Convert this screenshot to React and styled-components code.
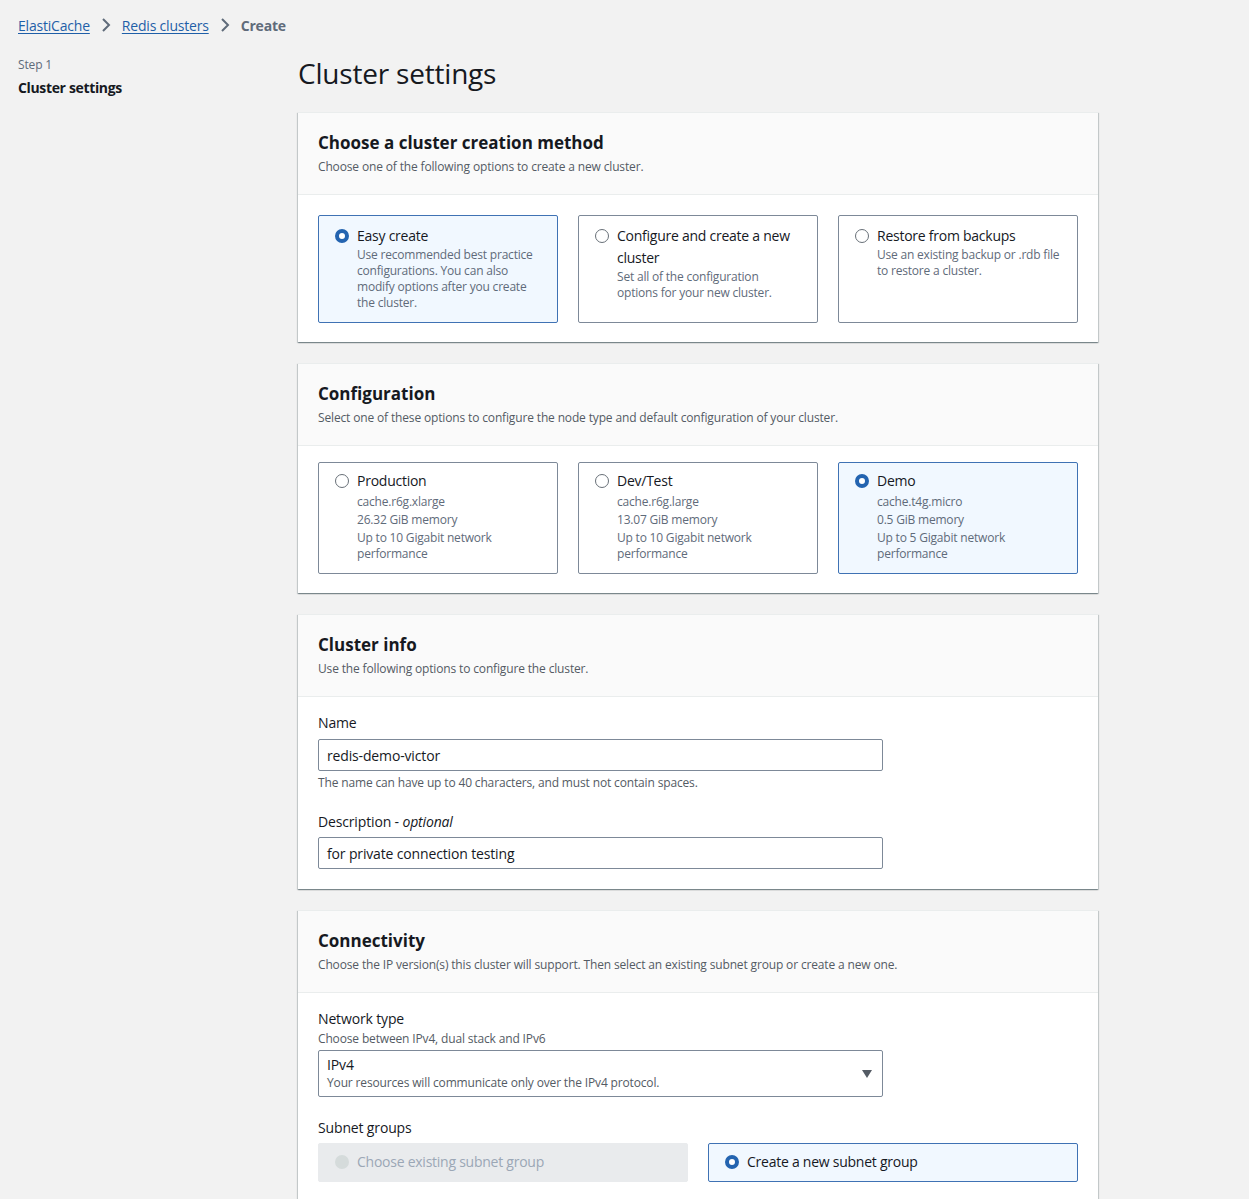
import React from "react";
import styled, { createGlobalStyle } from "styled-components";

const GlobalStyle = createGlobalStyle`
	body {
		margin: 0;
		background: #f2f2f2;
		font-family: "Open Sans", "Noto Sans", sans-serif;
		color: #16191f;
		letter-spacing: -0.15px;
	}
`;

const Page = styled.div`
	width: 1249px;
	min-height: 1199px;
	padding: 14px 0 0 18px;
	box-sizing: border-box;
`;

const Breadcrumbs = styled.nav`
	display: flex;
	align-items: center;
	gap: 11px;
	height: 22px;
	font-size: 14px;
	letter-spacing: -0.2px;
`;

const Crumb = styled.a`
	color: #1f5fa8;
	text-decoration: underline;
	text-underline-offset: 2px;
`;

const Current = styled.span`
	color: #5f6b7a;
	font-weight: 700;
`;

const Layout = styled.div`
	display: grid;
	grid-template-columns: 280px 800px;
	margin-top: 19px;
`;

const SideNav = styled.div`
	display: flex;
	flex-direction: column;
	gap: 5px;
	padding-top: 2px;
`;

const StepNum = styled.div`
	font-size: 12px;
	line-height: 16px;
	color: #5f6b7a;
`;

const StepName = styled.div`
	font-size: 14px;
	line-height: 20px;
	font-weight: 700;
	letter-spacing: -0.35px;
`;

const Main = styled.div`
	display: flex;
	flex-direction: column;
	gap: 21px;
`;

const Title = styled.h1`
	margin: 0;
	font-size: 28px;
	font-weight: 400;
	line-height: 36px;
	letter-spacing: -0.2px;
`;

const Container = styled.section`
	background: #fff;
	border-top: 1px solid #eaeded;
	box-shadow: 0 1px 1px 0 rgba(0, 28, 36, 0.3), 1px 1px 1px 0 rgba(0, 28, 36, 0.15),
		-1px 1px 1px 0 rgba(0, 28, 36, 0.15);
`;

const Header = styled.header`
	background: #fafafa;
	border-bottom: 1px solid #eaeded;
	padding: 19px 20px 19px;
`;

const Heading = styled.h2`
	margin: 0;
	font-size: 17px;
	line-height: 22px;
	font-weight: 700;
	letter-spacing: 0;
`;

const HeaderDesc = styled.p`
	margin: 5px 0 0;
	font-size: 12px;
	line-height: 16px;
	color: #545b64;
`;

const Body = styled.div`
	padding: ${(p) => p.$pad || "20px 20px 19px"};
	display: flex;
	flex-direction: column;
`;

const TileGrid = styled.div`
	display: grid;
	grid-template-columns: repeat(${(p) => p.$cols || 3}, 1fr);
	gap: 20px;
`;

const Tile = styled.label`
	display: flex;
	align-items: flex-start;
	gap: 8px;
	min-height: ${(p) => p.$h || "auto"};
	box-sizing: border-box;
	padding: ${(p) => p.$pad || "9px 17px 10px 16px"};
	border: 1px solid ${(p) => (p.$selected ? "#3f72b4" : p.$disabled ? "#e9ebed" : "#7d8998")};
	border-radius: 2px;
	background: ${(p) => (p.$selected ? "#f1f8ff" : p.$disabled ? "#e9ebed" : "#fff")};
	color: ${(p) => (p.$disabled ? "#9ba7b6" : "#16191f")};
`;

const Radio = styled.span`
	flex: none;
	width: 14px;
	height: 14px;
	margin-top: ${(p) => p.$mt || "4px"};
	border-radius: 50%;
	box-sizing: border-box;
	border: ${(p) =>
		p.$checked ? "4px solid #2464b0" : p.$disabled ? "7px solid #d5dbdb" : "1px solid #687078"};
	background: #fff;
`;

const TileText = styled.div`
	display: flex;
	flex-direction: column;
	gap: ${(p) => p.$gap || "0px"};
`;

const TileTitle = styled.div`
	font-size: 14px;
	line-height: 22px;
	letter-spacing: -0.25px;
`;

const TileDesc = styled.div`
	font-size: 12px;
	line-height: 16px;
	color: #5f6b7a;
	letter-spacing: -0.2px;
`;

const Field = styled.div`
	display: flex;
	flex-direction: column;
	margin-top: ${(p) => p.$mt || "0px"};
`;

const Label = styled.div`
	font-size: 14px;
	line-height: 20px;
	margin-bottom: ${(p) => p.$mb || "6px"};
	em {
		font-style: italic;
	}
`;

const Hint = styled.div`
	font-size: 12px;
	line-height: 16px;
	color: #545b64;
	margin: ${(p) => p.$m || "0"};
`;

const Input = styled.div`
	width: 565px;
	height: 32px;
	box-sizing: border-box;
	border: 1px solid #7d8998;
	border-radius: 2px;
	padding: 0 8px;
	display: flex;
	align-items: center;
	font-size: 14px;
	background: #fff;
`;

const Select = styled.div`
	width: 565px;
	height: 47px;
	box-sizing: border-box;
	border: 1px solid #7d8998;
	border-radius: 2px;
	padding: 4px 8px 0;
	display: flex;
	align-items: flex-start;
	justify-content: space-between;
	background: #fff;
`;

const SelectValue = styled.div`
	display: flex;
	flex-direction: column;
	font-size: 14px;
	line-height: 20px;
`;

const Caret = styled.svg`
	margin: 15px 2px 0 0;
`;

const methods = [
	{
		title: "Easy create",
		desc: "Use recommended best practice configurations. You can also modify options after you create the cluster.",
		selected: true,
	},
	{
		title: "Configure and create a new cluster",
		desc: "Set all of the configuration options for your new cluster.",
	},
	{
		title: "Restore from backups",
		desc: "Use an existing backup or .rdb file to restore a cluster.",
	},
];

const configs = [
	{ title: "Production", lines: ["cache.r6g.xlarge", "26.32 GiB memory", "Up to 10 Gigabit network performance"] },
	{ title: "Dev/Test", lines: ["cache.r6g.large", "13.07 GiB memory", "Up to 10 Gigabit network performance"] },
	{ title: "Demo", lines: ["cache.t4g.micro", "0.5 GiB memory", "Up to 5 Gigabit network performance"], selected: true },
];

const Chevron = () => (
	<svg width="10" height="14" viewBox="0 0 10 14">
		<path d="M2 1l6 6-6 6" fill="none" stroke="#5f6b7a" strokeWidth="2" />
	</svg>
);

export default function App() {
	return (
		<Page>
			<GlobalStyle />
			<Breadcrumbs>
				<Crumb>ElastiCache</Crumb>
				<Chevron />
				<Crumb>Redis clusters</Crumb>
				<Chevron />
				<Current>Create</Current>
			</Breadcrumbs>
			<Layout>
				<SideNav>
					<StepNum>Step 1</StepNum>
					<StepName>Cluster settings</StepName>
				</SideNav>
				<Main>
					<Title>Cluster settings</Title>

					<Container>
						<Header>
							<Heading>Choose a cluster creation method</Heading>
							<HeaderDesc>Choose one of the following options to create a new cluster.</HeaderDesc>
						</Header>
						<Body>
							<TileGrid>
								{methods.map((m) => (
									<Tile key={m.title} $selected={m.selected} $h="108px">
										<Radio $checked={m.selected} />
										<TileText>
											<TileTitle>{m.title}</TileTitle>
											<TileDesc>{m.desc}</TileDesc>
										</TileText>
									</Tile>
								))}
							</TileGrid>
						</Body>
					</Container>

					<Container>
						<Header>
							<Heading>Configuration</Heading>
							<HeaderDesc>
								Select one of these options to configure the node type and default configuration of your cluster.
							</HeaderDesc>
						</Header>
						<Body $pad="16px 20px 19px">
							<TileGrid>
								{configs.map((c) => (
									<Tile key={c.title} $selected={c.selected} $pad="7px 14px 11px 16px">
										<Radio $checked={c.selected} />
										<TileText $gap="2px">
											<TileTitle>{c.title}</TileTitle>
											{c.lines.map((l) => (
												<TileDesc key={l}>{l}</TileDesc>
											))}
										</TileText>
									</Tile>
								))}
							</TileGrid>
						</Body>
					</Container>

					<Container>
						<Header>
							<Heading>Cluster info</Heading>
							<HeaderDesc>Use the following options to configure the cluster.</HeaderDesc>
						</Header>
						<Body $pad="16px 20px 20px">
							<Field>
								<Label>Name</Label>
								<Input>redis-demo-victor</Input>
								<Hint $m="4px 0 0">The name can have up to 40 characters, and must not contain spaces.</Hint>
							</Field>
							<Field $mt="21px">
								<Label $mb="5px">
									Description - <em>optional</em>
								</Label>
								<Input>for private connection testing</Input>
							</Field>
						</Body>
					</Container>

					<Container>
						<Header>
							<Heading>Connectivity</Heading>
							<HeaderDesc>
								Choose the IP version(s) this cluster will support. Then select an existing subnet group or create a new one.
							</HeaderDesc>
						</Header>
						<Body $pad="16px 20px 20px">
							<Field>
								<Label $mb="0">Network type</Label>
								<Hint $m="2px 0 3px">Choose between IPv4, dual stack and IPv6</Hint>
								<Select>
									<SelectValue>
										<span>IPv4</span>
										<Hint>Your resources will communicate only over the IPv4 protocol.</Hint>
									</SelectValue>
									<Caret width="10" height="8" viewBox="0 0 10 8">
										<path d="M0 0h10L5 8z" fill="#545b64" />
									</Caret>
								</Select>
							</Field>
							<Field $mt="21px">
								<Label $mb="5px">Subnet groups</Label>
								<TileGrid $cols={2}>
									<Tile $disabled $h="39px" $pad="7px 16px 8px">
										<Radio $disabled $mt="4px" />
										<TileTitle>Choose existing subnet group</TileTitle>
									</Tile>
									<Tile $selected $h="39px" $pad="7px 16px 8px">
										<Radio $checked $mt="4px" />
										<TileTitle>Create a new subnet group</TileTitle>
									</Tile>
								</TileGrid>
							</Field>
						</Body>
					</Container>
				</Main>
			</Layout>
		</Page>
	);
}
